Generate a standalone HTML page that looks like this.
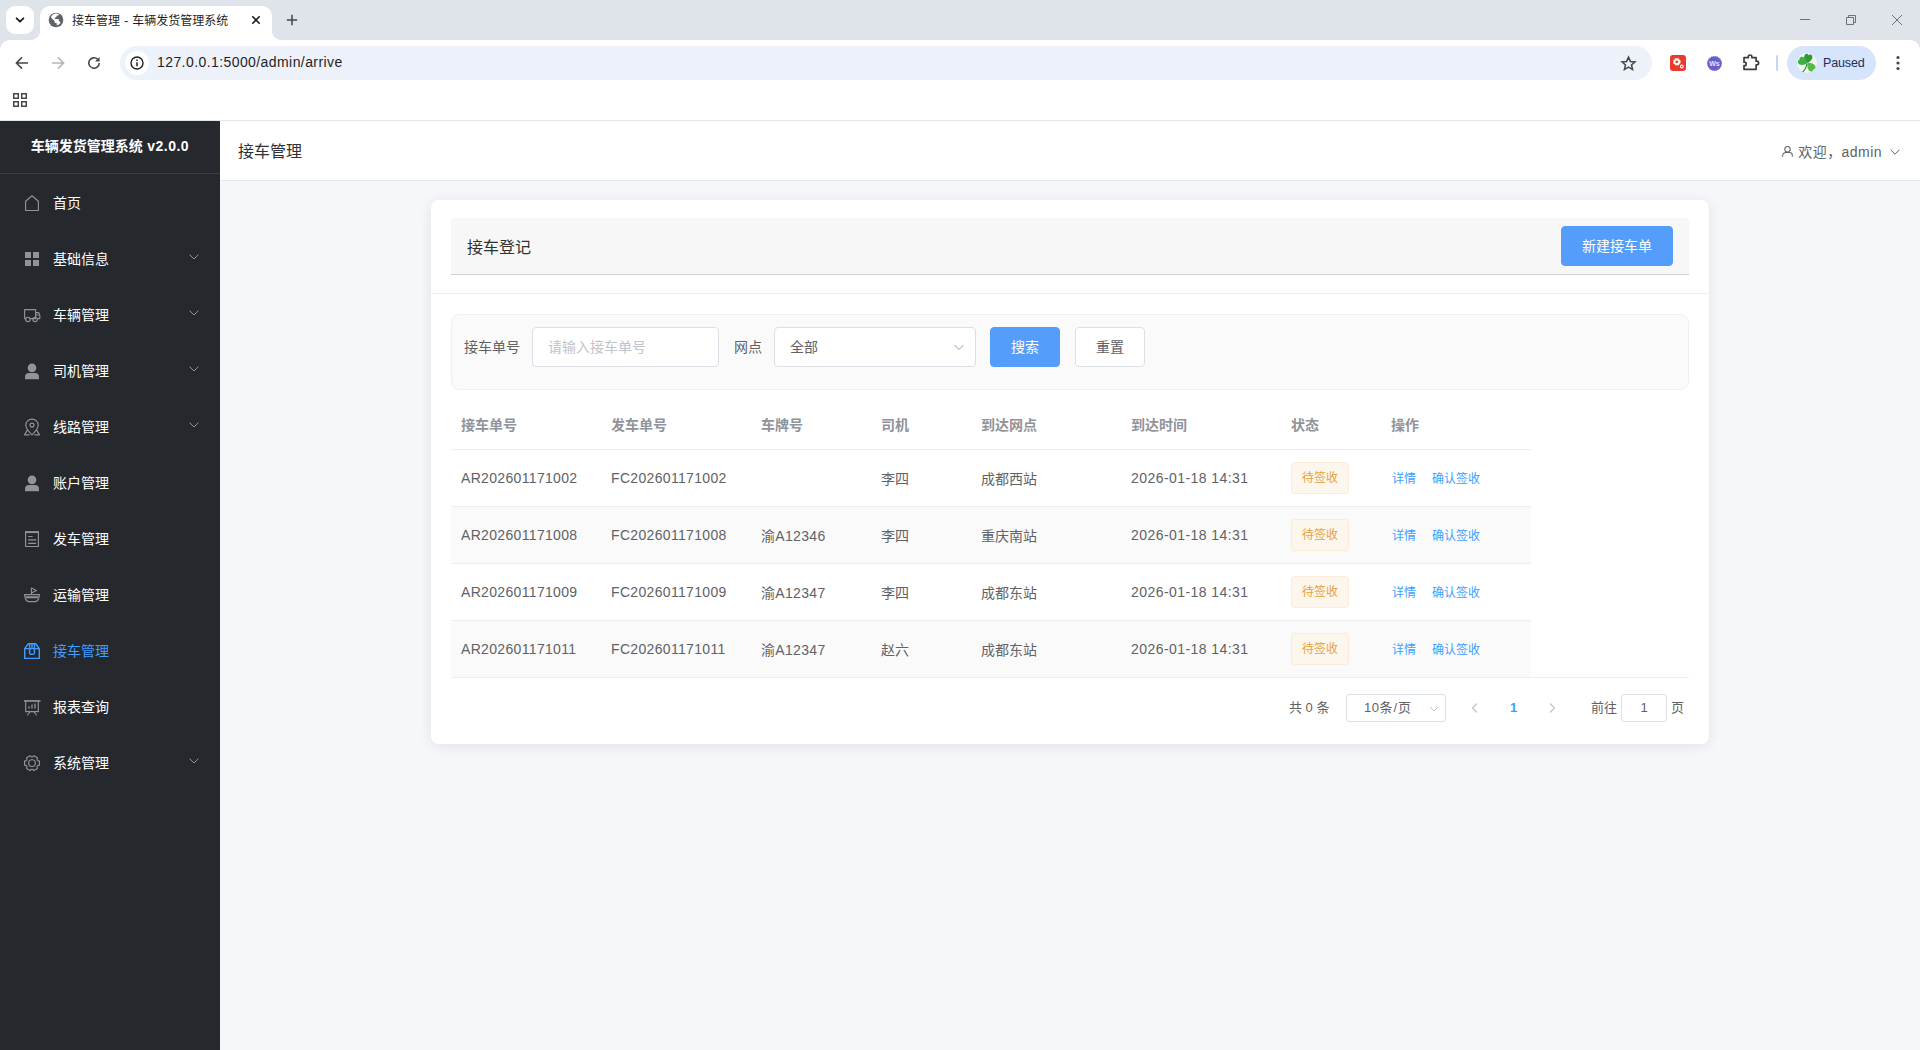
<!DOCTYPE html>
<html lang="zh-CN">
<head>
<meta charset="utf-8">
<title>接车管理 - 车辆发货管理系统</title>
<style>
*{box-sizing:border-box;margin:0;padding:0}
html,body{width:1920px;height:1050px;overflow:hidden;background:#fff}
body{font-family:"Liberation Sans","Noto Sans CJK SC",sans-serif;font-size:14px;color:#303133;position:relative}
svg{display:block}
/* ---------- browser chrome ---------- */
#chrome{position:absolute;left:0;top:0;width:1920px;height:121px;background:#fff}
#tabstrip{position:absolute;left:0;top:0;width:1920px;height:52px;background:#dfe3ea}
#tabsearch{position:absolute;left:6px;top:6px;width:28px;height:28px;border-radius:9px;background:#fff}
#tab{position:absolute;left:40px;top:6px;width:232px;height:34px;background:#fff;border-radius:10px 10px 0 0}
#tab:before,#tab:after{content:"";position:absolute;bottom:0;width:10px;height:10px}
#tab:before{left:-10px;background:radial-gradient(circle at 0 0,rgba(255,255,255,0) 10px,#fff 10.5px)}
#tab:after{right:-10px;background:radial-gradient(circle at 100% 0,rgba(255,255,255,0) 10px,#fff 10.5px)}
#tabtitle{position:absolute;left:32px;top:0;line-height:31px;word-spacing:.8px;font-size:12px;color:#1f1f1f;white-space:nowrap}
#toolbar{position:absolute;left:0;top:40px;width:1920px;height:46px;background:#fff;border-radius:10px 10px 0 0}
#omni{position:absolute;left:120px;top:6px;width:1532px;height:34px;border-radius:17px;background:#edf2fa}
#omni .info{position:absolute;left:5px;top:5px;width:24px;height:24px;border-radius:12px;background:#fff}
#url{position:absolute;left:37px;top:0;line-height:33px;font-size:14px;color:#1f1f1f;white-space:nowrap;letter-spacing:.42px}
#bookbar{position:absolute;left:0;top:86px;width:1920px;height:34px;background:#fff}
#chromeline{position:absolute;left:0;top:120px;width:1920px;height:1px;background:#e3e5e8}
.abs{position:absolute}
/* ---------- page ---------- */
#page{position:absolute;left:0;top:121px;width:1920px;height:929px;background:#f5f7fa;overflow:hidden}
#side{position:absolute;left:0;top:0;width:220px;height:929px;background:#25282d;color:#fff}
#logo{height:53px;margin-bottom:1px;border-bottom:1px solid #3a3d44;text-align:center;font-weight:bold;font-size:14px;line-height:50px;white-space:nowrap}
.mi{position:relative;height:56px;line-height:56px;padding-left:53px;font-size:14px;white-space:nowrap}
.mi .ic{position:absolute;left:20px;top:16px;width:24px;height:24px;color:#909399}
.mi .arr{position:absolute;left:188px;top:19.5px;width:12px;height:12px}
.mi.on{color:#409eff}
.mi.on .ic{color:#409eff}
#head{position:absolute;left:220px;top:0;width:1700px;height:60px;background:#fff;border-bottom:1px solid #e6e9ef}
#head h1{position:absolute;left:18px;top:1px;line-height:59px;font-size:16px;font-weight:normal;color:#303133}
#user{position:absolute;right:38px;top:.5px;line-height:60px;font-size:14px;color:#606266;white-space:nowrap}
#card{position:absolute;left:431px;top:79px;width:1278px;height:544px;background:#fff;border-radius:8px;box-shadow:0 2px 14px rgba(0,0,0,.09)}

#card .chead{position:absolute;left:20px;top:18px;width:1238px;height:57px;background:#f7f7f7;border-bottom:1px solid #d0d0d0;border-radius:4px 4px 0 0}
#card .chead .t{position:absolute;left:16px;top:1.500px;line-height:56px;font-size:16px;color:#303133}
.btn{position:absolute;height:40px;line-height:38px;border-radius:4px;font-size:14px;text-align:center;border:1px solid #dcdfe6;background:#fff;color:#606266;white-space:nowrap}
.btn.pri{background:#559dfb;border-color:#559dfb;color:#fff}
#card .hline{position:absolute;left:0;top:93px;width:1278px;height:1px;background:#ebeef5}
#filter{position:absolute;left:20px;top:114px;width:1238px;height:76px;border:1px solid #eeeff2;border-radius:9px;background:#fafafa}
#filter .lab{position:absolute;top:12px;line-height:40px;font-size:14px;color:#606266;white-space:nowrap}
.inp{position:absolute;top:12px;height:40px;border:1px solid #dcdfe6;border-radius:4px;background:#fff;line-height:38px;padding-left:15px;font-size:14px;color:#606266;white-space:nowrap}
.inp.ph{color:#c0c4cc}
table{position:absolute;left:20px;top:199px;border-collapse:collapse;table-layout:fixed;width:1080px}
th{height:50px;text-align:left;padding:0 10px;font-size:14px;color:#909399;font-weight:bold;border-bottom:1px solid #ebeef5;white-space:nowrap}
td{height:57px;padding:0 10px;font-size:14px;color:#606266;border-bottom:1px solid #ebeef5;white-space:nowrap}
tr.s td{background:#fafafa}
.n{letter-spacing:.33px}.d{letter-spacing:.44px}
.tag{display:inline-block;height:32px;line-height:30px;padding:0 10px;border:1px solid #faecd8;border-radius:4px;background:#fdf6ec;color:#e6a23c;font-size:12px;vertical-align:middle}
.lk{display:inline-block;font-size:12px;color:#409eff}
#tline{position:absolute;left:20px;top:477px;width:1238px;height:1px;background:#ebeef5}
#pager{position:absolute;left:0;top:494px;width:1278px;height:28px;font-size:13px;color:#606266}
#pager>span,#pager>div{position:absolute;top:0;line-height:28px;white-space:nowrap}
#pager .box{border:1px solid #dcdfe6;border-radius:3px;background:#fff;height:28px;line-height:26px;text-align:center}
</style>
</head>
<body>
<div id="chrome">
  <div id="tabstrip">
    <div id="tabsearch"><svg class="abs" style="left:8px;top:8px" width="12" height="12" viewBox="0 0 12 12"><path fill="none" stroke="#1f1f1f" stroke-width="1.8" stroke-linecap="round" stroke-linejoin="round" d="M2.6 4.3L6 7.7l3.400-3.400"/></svg></div>
    <div id="tab">
      <svg class="abs" style="left:8px;top:6px" width="16" height="16" viewBox="0 0 16 16"><circle cx="8" cy="8" r="7.300" fill="#5f6368"/><path fill="#fff" d="M6.800 1.700c1.600-.4 3.300.1 4.300.9-.3.700-1 1-1.700 1-.6 0-.9.400-.9.900 0 .6-.4.900-1 .9-.5 0-.9.300-.9.800 0 .600.400.800 1 .8h2.200c.7 0 1.100.5 1.100 1.100v.9c.5 0 .9.300 1.100.8l.5.900c-.9 1.500-2.200 2.400-3.700 2.700v-1.300c0-.6-.4-1-1-1-.700 0-1.200-.5-1.200-1.200v-.8L2.900 5.400c.5-1.800 2-3.300 3.900-3.700z"/></svg>
      <span id="tabtitle">接车管理 - 车辆发货管理系统</span>
      <svg class="abs" style="left:210px;top:8px" width="12" height="12" viewBox="0 0 12 12"><path fill="none" stroke="#1f1f1f" stroke-width="1.600" d="M2.300 2.300l7.400 7.400M9.700 2.300L2.300 9.700"/></svg>
    </div>
    <svg class="abs" style="left:285px;top:13px" width="14" height="14" viewBox="0 0 14 14"><path fill="none" stroke="#474747" stroke-width="1.500" d="M7 1.800v10.400M1.800 7h10.400"/></svg>
    <svg class="abs" style="left:1799px;top:13px" width="12" height="12" viewBox="0 0 12 12"><path fill="none" stroke="#6e7176" stroke-width="1" d="M1 6.500h10"/></svg>
    <svg class="abs" style="left:1845px;top:14px" width="12" height="12" viewBox="0 0 12 12"><path fill="none" stroke="#6e7176" stroke-width="1" d="M1.500 3.500h7v7h-7zM3.500 3.500v-2h7v7h-2"/></svg>
    <svg class="abs" style="left:1891px;top:14px" width="12" height="12" viewBox="0 0 12 12"><path fill="none" stroke="#6e7176" stroke-width="1" d="M1 1l10 10M11 1L1 11"/></svg>
  </div>
  <div id="toolbar">
    <svg class="abs" style="left:14px;top:15px" width="16" height="16" viewBox="0 0 16 16"><path fill="none" stroke="#474747" stroke-width="1.600" stroke-linejoin="miter" d="M14 8H2.800M8 2.400L2.400 8 8 13.600"/></svg>
    <svg class="abs" style="left:50px;top:15px" width="16" height="16" viewBox="0 0 16 16"><path fill="none" stroke="#b4b6ba" stroke-width="1.600" d="M2 8h11.200M8 2.400L13.600 8 8 13.600"/></svg>
    <svg class="abs" style="left:86px;top:15px" width="16" height="16" viewBox="0 0 16 16"><path fill="none" stroke="#474747" stroke-width="1.600" d="M13.200 8a5.200 5.200 0 1 1-1.600-3.750"/><path fill="#474747" d="M13.600 2v4.600H9z"/></svg>
    <div id="omni"><div class="info"><svg class="abs" style="left:4px;top:4px" width="16" height="16" viewBox="0 0 16 16"><circle cx="8" cy="8" r="6" fill="none" stroke="#1f1f1f" stroke-width="1.400"/><path fill="none" stroke="#1f1f1f" stroke-width="1.500" d="M8 7.200v4M8 4.600v1.500"/></svg></div><span id="url">127.0.0.1:5000/admin/arrive</span>
      <svg class="abs" style="left:1499.500px;top:8.500px" width="17" height="17" viewBox="0 0 18 18"><path fill="none" stroke="#474747" stroke-width="1.600" stroke-linejoin="miter" d="M9 2.300l2 4.500 4.900.5-3.700 3.300 1.100 4.800L9 12.900l-4.300 2.500 1.100-4.800L2.100 7.300 7 6.800z"/></svg>
    </div>
    <div class="abs" style="left:1670px;top:15px;width:16px;height:16px;border-radius:3px;background:#ea3a2e"><svg width="16" height="16" viewBox="0 0 16 16"><circle cx="6.800" cy="6.800" r="2.600" fill="none" stroke="#fff" stroke-width="2.400" stroke-dasharray="1.500 .55"/><circle cx="6.800" cy="6.800" r="2.200" fill="none" stroke="#fff" stroke-width="1.300"/><circle cx="11.800" cy="11.500" r="1.400" fill="none" stroke="#fff" stroke-width="1.100"/></svg></div>
    <div class="abs" style="left:1707px;top:15.500px;width:15px;height:15px;border-radius:8px;background:#6a5fc9;border:1px dotted #9a92e0;font-size:7px;font-weight:bold;color:#e4e1fa;line-height:13px;text-align:center">Ws</div>
    <svg class="abs" style="left:1742px;top:14px" width="18" height="18" viewBox="0 0 18 18"><path fill="none" stroke="#3c3c3c" stroke-width="1.700" stroke-linejoin="round" d="M2 3.700h4.300v-.9a1.800 1.800 0 0 1 3.600 0v.9h4.200v3.500h.7a1.800 1.800 0 0 1 0 3.600h-.7v4.500H2v-3.700h.5a1.700 1.700 0 0 0 0-3.400H2z"/></svg>
    <div class="abs" style="left:1776px;top:15px;width:2px;height:16px;background:#c5d6f5;border-radius:1px"></div>
    <div class="abs" style="left:1787px;top:6px;width:89px;height:34px;border-radius:17px;background:#d6e4fc">
      <svg class="abs" style="left:10px;top:7px" width="20" height="20" viewBox="0 0 20 20"><circle cx="10" cy="10" r="10" fill="#eef5ea"/><path fill="#2f9a3a" d="M10.500 10C7 7.500 6 3 8.500 1.200c1.300-.9 2.700 0 3 1 .8-1 2.600-1.200 3.500.2 1.400 2.300-1 6-4.500 7.600z"/><path fill="#3fae45" d="M10 10.300C6.500 12.800 2.200 12.500 1 9.800c-.6-1.500.4-2.800 1.600-3C2 5.600 2.800 4 4.400 3.800c2.700-.3 5 3 5.600 6.500z"/><path fill="#57b947" d="M10.300 10.200c3.900-1 7.700.700 8.200 3.500.3 1.600-1 2.600-2.100 2.600.2 1.200-.8 2.500-2.400 2.300-2.700-.4-4.200-4.600-3.700-8.400z"/><path fill="#2f8f35" d="M10 10.500c.3 3-.8 6-3.800 8.700l-1-.8c2.600-2.200 3.800-4.800 4-8z"/></svg>
      <span class="abs" style="left:36px;top:0;line-height:35px;font-size:12.500px;color:#1b2f5e;letter-spacing:-.15px">Paused</span>
    </div>
    <svg class="abs" style="left:1890px;top:13px" width="16" height="20" viewBox="0 0 16 20"><circle cx="8" cy="4.500" r="1.600" fill="#474747"/><circle cx="8" cy="10" r="1.600" fill="#474747"/><circle cx="8" cy="15.500" r="1.600" fill="#474747"/></svg>
  </div>
  <div id="bookbar"><svg class="abs" style="left:12px;top:6px" width="16" height="16" viewBox="0 0 16 16"><path fill="none" stroke="#474747" stroke-width="1.500" d="M1.700 1.700h4.600v4.600H1.700zM9.700 1.700h4.600v4.600H9.700zM1.700 9.700h4.600v4.600H1.700zM9.700 9.700h4.600v4.600H9.700z"/></svg></div>
  <div id="chromeline"></div>
</div>
<div id="page">
  <div id="side">
    <div id="logo">车辆发货管理系统<span style="letter-spacing:.5px"> v2.0.0</span></div>
    <div id="menu">
<div class="mi"><svg class="ic" viewBox="0 0 24 24"><path fill="none" stroke="currentColor" stroke-width="1.15" stroke-linejoin="round" stroke-linecap="round" d="M5.6 19.5V10.2L12 4.7l6.4 5.5v9.3z"/></svg>首页</div>
<div class="mi"><svg class="ic" viewBox="0 0 24 24"><path fill="currentColor" d="M5 5h6v6H5zM13 5h6v6h-6zM5 13h6v6H5zM13 13h6v6h-6z"/></svg>基础信息<svg class="arr" viewBox="0 0 12 12"><path fill="none" stroke="#909399" stroke-width="1" d="M1.6 3.6L6 8l4.4-4.4"/></svg></div>
<div class="mi"><svg class="ic" viewBox="0 0 24 24"><path fill="none" stroke="currentColor" stroke-width="1.15" stroke-linejoin="round" stroke-linecap="round" d="M5.6 15.6H4.6V6.6h11v9h-5.4M15.6 9.6h3.2l1 2.6v3.4h-2.2M15.8 12h2.6"/><circle fill="none" stroke="currentColor" stroke-width="1.15" stroke-linejoin="round" stroke-linecap="round" cx="7.9" cy="16.4" r="2.2"/><circle fill="none" stroke="currentColor" stroke-width="1.15" stroke-linejoin="round" stroke-linecap="round" cx="15.1" cy="16.4" r="2.2"/></svg>车辆管理<svg class="arr" viewBox="0 0 12 12"><path fill="none" stroke="#909399" stroke-width="1" d="M1.6 3.6L6 8l4.4-4.4"/></svg></div>
<div class="mi"><svg class="ic" viewBox="0 0 24 24"><circle fill="currentColor" cx="12" cy="8.9" r="4.3"/><path fill="currentColor" d="M5 20.2v-2.3a4 4 0 0 1 4-4h6a4 4 0 0 1 4 4v2.3z"/></svg>司机管理<svg class="arr" viewBox="0 0 12 12"><path fill="none" stroke="#909399" stroke-width="1" d="M1.6 3.6L6 8l4.4-4.4"/></svg></div>
<div class="mi"><svg class="ic" viewBox="0 0 24 24"><path fill="none" stroke="currentColor" stroke-width="1.15" stroke-linejoin="round" stroke-linecap="round" d="M12 19.8c-3.6-3.4-6.2-6.6-6.2-9.5a6.2 6.2 0 0 1 12.4 0c0 2.9-2.6 6.1-6.2 9.5z"/><circle fill="none" stroke="currentColor" stroke-width="1.15" stroke-linejoin="round" stroke-linecap="round" cx="12" cy="10.1" r="2"/><path fill="none" stroke="currentColor" stroke-width="1.15" stroke-linejoin="round" stroke-linecap="round" d="M7 15.6L4.6 19.9h4.6M17 15.6l2.4 4.3h-4.6"/></svg>线路管理<svg class="arr" viewBox="0 0 12 12"><path fill="none" stroke="#909399" stroke-width="1" d="M1.6 3.6L6 8l4.4-4.4"/></svg></div>
<div class="mi"><svg class="ic" viewBox="0 0 24 24"><circle fill="currentColor" cx="12" cy="8.9" r="4.3"/><path fill="currentColor" d="M5 20.2v-2.3a4 4 0 0 1 4-4h6a4 4 0 0 1 4 4v2.3z"/></svg>账户管理</div>
<div class="mi"><svg class="ic" viewBox="0 0 24 24"><path fill="none" stroke="currentColor" stroke-width="1.15" stroke-linejoin="round" stroke-linecap="round" d="M5.6 5.2h12.8v14.3H5.6z"/><path fill="currentColor" d="M5 4.1h14v2H5z"/><path fill="none" stroke="currentColor" stroke-width="1.15" stroke-linejoin="round" stroke-linecap="round" d="M8.6 9.5h3.6M8.6 12.9h7.2M8.6 16.3h7.2"/></svg>发车管理</div>
<div class="mi"><svg class="ic" viewBox="0 0 24 24"><path fill="none" stroke="currentColor" stroke-width="1.15" stroke-linejoin="round" stroke-linecap="round" d="M4.6 11.6h14.8c-.3 3.6-1.4 6-3.2 7H7.8c-1.8-1-2.9-3.4-3.2-7z"/><path fill="currentColor" d="M5.6 13.2h12.8l-.5 2H6.1z"/><path fill="none" stroke="currentColor" stroke-width="1.15" stroke-linejoin="round" stroke-linecap="round" d="M11.4 11.4V5l5 2.5-5 2.5"/></svg>运输管理</div>
<div class="mi on"><svg class="ic" viewBox="0 0 24 24"><path fill="none" stroke="currentColor" stroke-width="1.4" stroke-linejoin="round" d="M4.7 9.6L8.4 4.8h7.2l3.7 4.8v9.8H4.7zM4.7 9.6h14.6M9.6 4.8v9a1.6 1.6 0 0 0 1.6 1.6h1.6a1.6 1.6 0 0 0 1.6-1.6v-9M12 4.8v4.8"/></svg>接车管理</div>
<div class="mi"><svg class="ic" viewBox="0 0 24 24"><path fill="currentColor" d="M4 5.1h16.5v1.7H4z"/><path fill="none" stroke="currentColor" stroke-width="1.15" stroke-linejoin="round" stroke-linecap="round" d="M5.7 6.5v10.1h12.6V6.5M10 17l-2.4 3M14 17l2.4 3"/><path fill="none" stroke="currentColor" stroke-width="1.3" d="M9 13.6v-2.4M12 13.6V9.6M15 13.6V8.6"/></svg>报表查询</div>
<div class="mi"><svg class="ic" viewBox="0 0 24 24"><path fill="none" stroke="currentColor" stroke-width="1.15" stroke-linejoin="round" stroke-linecap="round" d="M17.66 9.58 L19.44 10.11 L19.44 14.09 L17.66 14.62 L17.02 15.74 L17.44 17.54 L13.99 19.54 L12.65 18.27 L11.35 18.27 L10.01 19.54 L6.56 17.54 L6.98 15.74 L6.34 14.62 L4.56 14.09 L4.56 10.11 L6.34 9.58 L6.98 8.46 L6.56 6.66 L10.01 4.66 L11.35 5.93 L12.65 5.93 L13.99 4.66 L17.44 6.66 L17.02 8.46Z"/><circle fill="none" stroke="currentColor" stroke-width="1.15" stroke-linejoin="round" stroke-linecap="round" cx="12" cy="12.1" r="3.4"/></svg>系统管理<svg class="arr" viewBox="0 0 12 12"><path fill="none" stroke="#909399" stroke-width="1" d="M1.6 3.6L6 8l4.4-4.4"/></svg></div>
</div>
  </div>
  <div id="head"><h1>接车管理</h1><div id="user"><svg class="abs" style="left:-17px;top:23.500px" width="13" height="13" viewBox="0 0 14 14"><circle cx="7" cy="4.600" r="2.900" fill="none" stroke="#606266" stroke-width="1.100"/><path fill="none" stroke="#606266" stroke-width="1.100" d="M1.800 12.600v-1.300a3.200 3.200 0 0 1 3.200-3.200h4a3.200 3.200 0 0 1 3.200 3.200v1.300"/></svg><span style="letter-spacing:.45px">欢迎，admin</span><svg class="abs" style="right:-19px;top:24.500px" width="12" height="12" viewBox="0 0 12 12"><path fill="none" stroke="#606266" stroke-width="1" d="M1.600 3.800L6 8.200l4.400-4.400"/></svg></div></div>
  <div id="card">
  <div class="chead"><span class="t">接车登记</span><div class="btn pri" style="left:1110px;top:8px;width:112px">新建接车单</div></div>
  <div class="hline"></div>
  <div id="filter">
    <span class="lab" style="left:12px">接车单号</span>
    <div class="inp ph" style="left:80px;width:187px">请输入接车单号</div>
    <span class="lab" style="left:282px">网点</span>
    <div class="inp" style="left:322px;width:202px">全部<svg class="abs" style="right:9px;top:11.500px" width="14" height="14" viewBox="0 0 14 14"><path fill="none" stroke="#c0c4cc" stroke-width="1.200" d="M2.5 5l4.5 4.5L11.500 5"/></svg></div>
    <div class="btn pri" style="left:538px;top:12px;width:70px">搜索</div>
    <div class="btn" style="left:623px;top:12px;width:70px">重置</div>
  </div>
  <table>
    <colgroup><col width="150"><col width="150"><col width="120"><col width="100"><col width="150"><col width="160"><col width="100"><col width="150"></colgroup>
    <tr><th>接车单号</th><th>发车单号</th><th>车牌号</th><th>司机</th><th>到达网点</th><th>到达时间</th><th>状态</th><th>操作</th></tr>
<tr><td class="n">AR202601171002</td><td class="n">FC202601171002</td><td class="n"></td><td>李四</td><td>成都西站</td><td class="d">2026-01-18 14:31</td><td><span class="tag">待签收</span></td><td><span class="lk" style="margin-left:1px">详情</span><span class="lk" style="margin-left:16px">确认签收</span></td></tr>
<tr class="s"><td class="n">AR202601171008</td><td class="n">FC202601171008</td><td class="n">渝A12346</td><td>李四</td><td>重庆南站</td><td class="d">2026-01-18 14:31</td><td><span class="tag">待签收</span></td><td><span class="lk" style="margin-left:1px">详情</span><span class="lk" style="margin-left:16px">确认签收</span></td></tr>
<tr><td class="n">AR202601171009</td><td class="n">FC202601171009</td><td class="n">渝A12347</td><td>李四</td><td>成都东站</td><td class="d">2026-01-18 14:31</td><td><span class="tag">待签收</span></td><td><span class="lk" style="margin-left:1px">详情</span><span class="lk" style="margin-left:16px">确认签收</span></td></tr>
<tr class="s"><td class="n">AR202601171011</td><td class="n">FC202601171011</td><td class="n">渝A12347</td><td>赵六</td><td>成都东站</td><td class="d">2026-01-18 14:31</td><td><span class="tag">待签收</span></td><td><span class="lk" style="margin-left:1px">详情</span><span class="lk" style="margin-left:16px">确认签收</span></td></tr>
  </table>
  <div id="tline"></div>
  <div id="pager">
    <span style="left:858px">共 0 条</span>
    <div class="box" style="left:915px;width:100px;text-align:left;padding-left:17px"><span style="letter-spacing:.5px">10</span>条<span style="padding:0 1px">/</span>页<svg class="abs" style="right:5px;top:8px" width="12" height="12" viewBox="0 0 12 12"><path fill="none" stroke="#c0c4cc" stroke-width="1" d="M2 4l4 4 4-4"/></svg></div>
    <svg class="abs" style="left:1038px;top:8px" width="12" height="12" viewBox="0 0 12 12"><path fill="none" stroke="#c0c4cc" stroke-width="1.2" d="M8 1.500L3.500 6 8 10.500"/></svg>
    <span style="left:1079px;color:#409eff;font-weight:bold">1</span>
    <svg class="abs" style="left:1115px;top:8px" width="12" height="12" viewBox="0 0 12 12"><path fill="none" stroke="#c0c4cc" stroke-width="1.2" d="M4 1.500L8.500 6 4 10.500"/></svg>
    <span style="left:1160px">前往</span>
    <div class="box" style="left:1190px;width:46px">1</div>
    <span style="left:1240px">页</span>
  </div>
</div>
</div>
</body>
</html>
